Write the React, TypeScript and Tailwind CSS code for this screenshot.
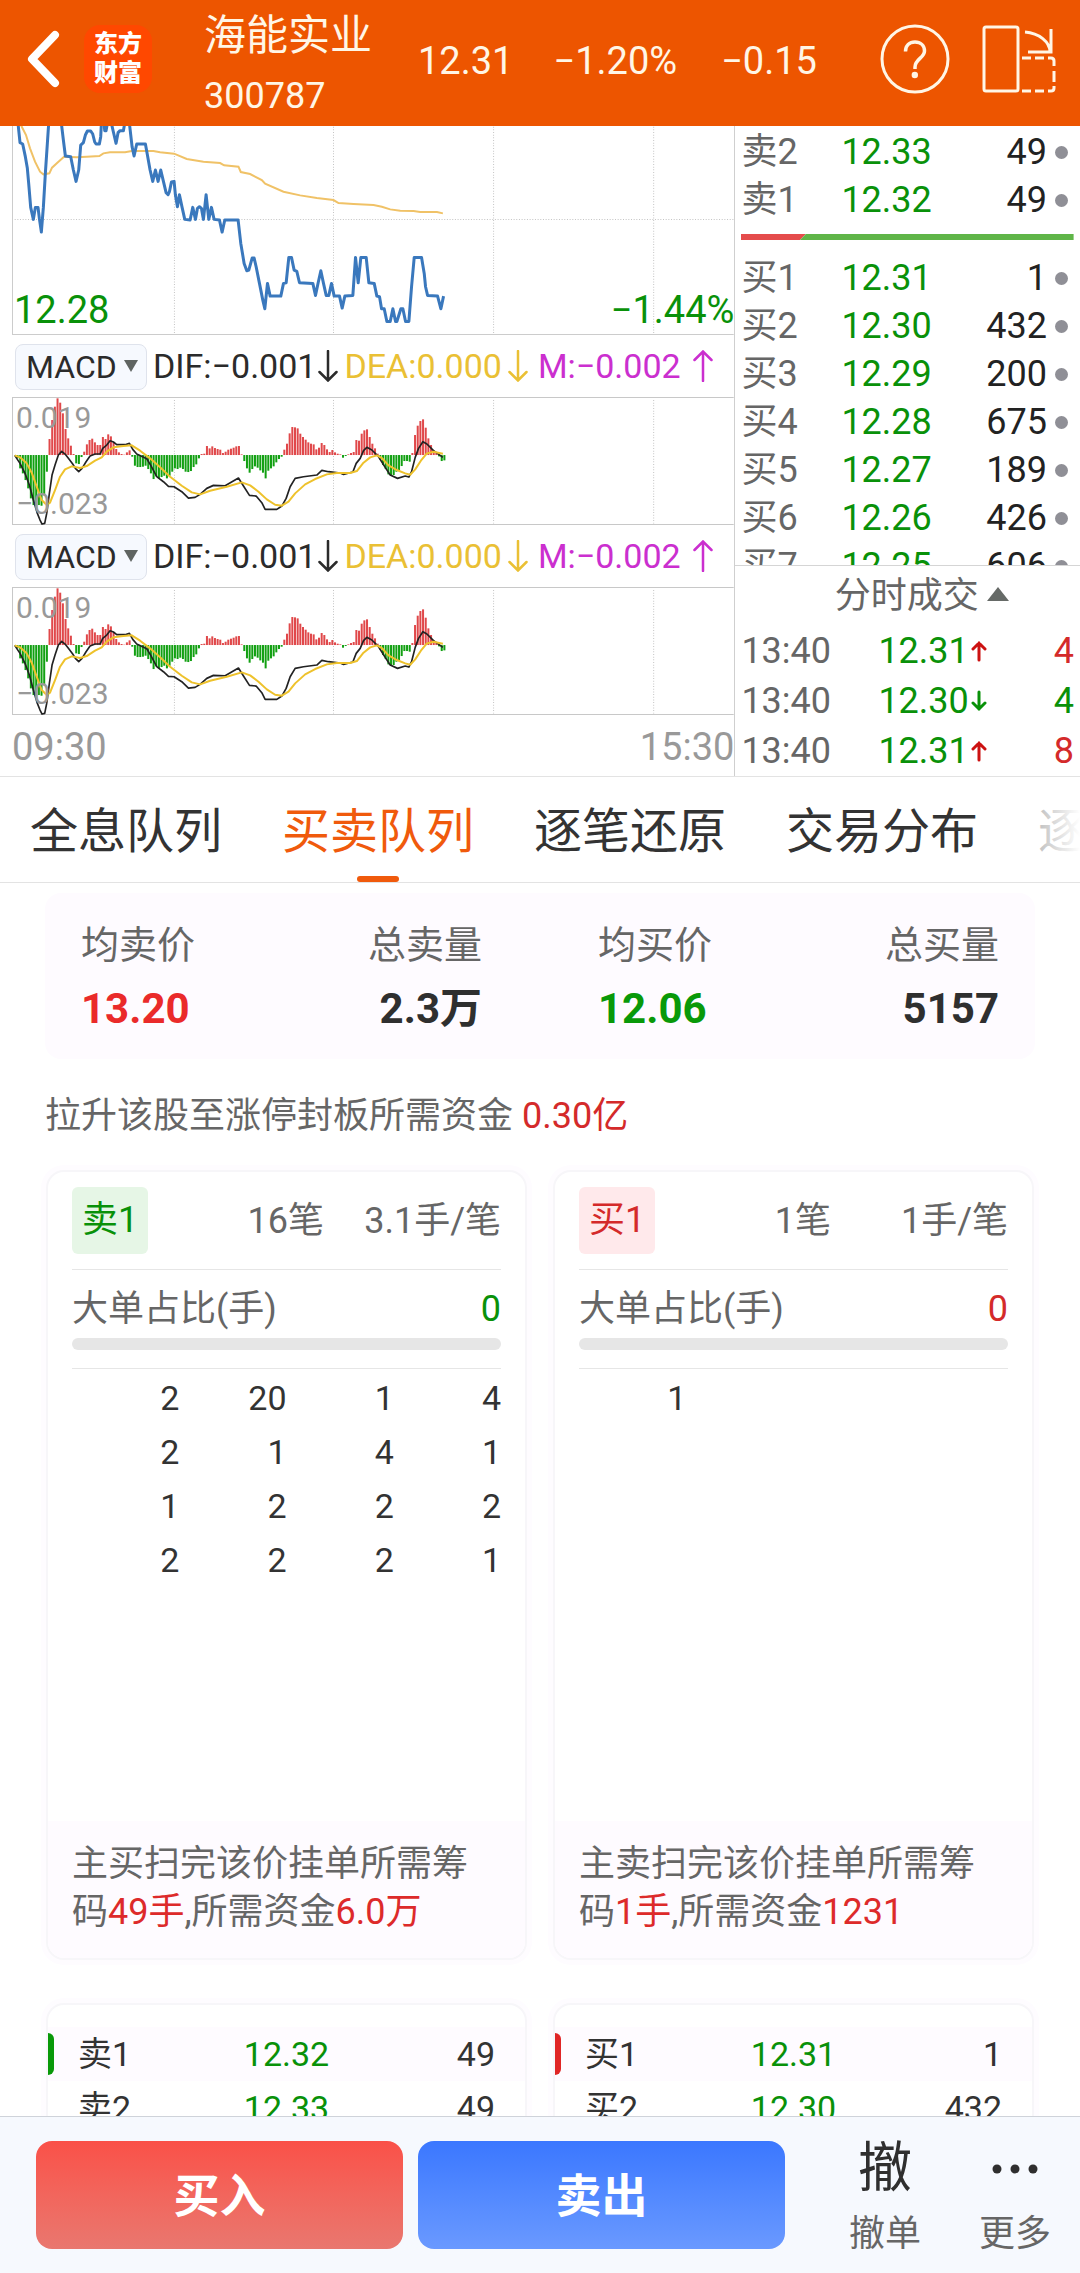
import clsx from "clsx";

type Quote = { label: string; price: string; volume: string };

const sells: Quote[] = [
  { label: "卖2", price: "12.33", volume: "49" },
  { label: "卖1", price: "12.32", volume: "49" },
];

const buys: Quote[] = [
  { label: "买1", price: "12.31", volume: "1" },
  { label: "买2", price: "12.30", volume: "432" },
  { label: "买3", price: "12.29", volume: "200" },
  { label: "买4", price: "12.28", volume: "675" },
  { label: "买5", price: "12.27", volume: "189" },
  { label: "买6", price: "12.26", volume: "426" },
  { label: "买7", price: "12.25", volume: "606" },
];

const trades = [
  { time: "13:40", price: "12.31", up: true, volume: "4" },
  { time: "13:40", price: "12.30", up: false, volume: "4" },
  { time: "13:40", price: "12.31", up: true, volume: "8" },
];

const tabs = ["全息队列", "买卖队列", "逐笔还原", "交易分布", "逐"];

const priceLines = [
  "54,10 60,68 68,72 76,110 82,145 86,190 92,262 100,298 106,262 114,262 118,295 124,336 130,262 136,160 142,70 146,10",
  "184,10 190,60 196,108 212,110 220,150 228,184 236,150 242,75 250,68 256,45 262,33 272,33 278,42 284,66 288,72 298,72 302,50 304,10",
  "312,10 314,32 318,32 322,10",
  "334,10 340,36 348,70 354,38 360,32 370,32 374,10",
  "388,10 396,80 402,108 410,72 436,72 442,105 450,150 458,184 466,150 474,184 482,150 490,184 498,218 504,224 508,215 514,186 522,184 526,225 532,260 538,224 546,262 554,298 570,300 578,262 586,298 592,265 598,260 604,265 610,298 618,224 626,298 634,262 642,298 658,300 666,336 674,300 714,300 722,370 732,430 740,452 746,450 756,414 762,414 768,440 778,490 788,540 794,566 802,490 810,528 842,528 850,490 858,488 866,412 874,412 882,450 890,454 898,488 938,490 946,526 954,488 962,452 970,490 978,526 986,526 994,490 1002,528 1018,528 1026,564 1034,528 1058,526 1066,412 1074,488 1082,412 1098,412 1106,488 1122,490 1130,528 1138,530 1144,566 1152,566 1160,604 1170,604 1178,566 1186,604 1190,604 1202,566 1208,566 1216,604 1226,604 1234,500 1242,412 1264,412 1272,460 1276,500 1282,526 1312,528 1322,566 1330,528",
];

const averageLine =
  "60,10 78,45 90,85 105,125 120,155 130,163 148,160 156,143 172,128 192,110 230,112 260,110 298,108 310,100 330,97 375,97 395,93 460,93 480,97 522,101 560,117 610,125 660,129 672,136 715,140 722,156 750,162 785,180 795,191 850,215 900,226 950,234 1000,240 1015,249 1060,252 1120,255 1145,260 1170,268 1200,272 1240,273 1260,276 1310,276 1328,280";

const macdBars = [
  -10, -40, -55, -75, -100, -130, -150, -158, -150, -152, -120, -50, 48, 105, 145, 170, 157, 125, 78, 50, 28, 3, -25,
  -27, -6, 10, 32, 45, 49, 38, 30, 30, 54, 48, 62, 56, 38, 18, 8, 3, 1, 8, 14, -5, -32, -36, -36, -35, -32, -42, -55,
  -72, -64, -70, -66, -62, -70, -62, -50, -40, -42, -38, -42, -50, -51, -48, -36, -28, -10, 3, 4, 27, 20, 26, 21, 18,
  16, 6, 10, 16, 19, 22, 26, 27, 2, -18, -40, -53, -42, -34, -38, -46, -53, -70, -47, -40, -34, -22, -12, -5, 16, 34,
  65, 84, 83, 80, 64, 54, 46, 38, 34, 32, 17, 22, 36, 30, 17, 9, 15, 8, 4, 2, -8, -3, 2, 6, 9, 45, 43, 64, 74, 77, 54,
  34, 20, 4, -14, -30, -42, -58, -62, -60, -50, -48, -33, -18, -18, -20, 6, 60, 88, 102, 107, 82, 50, 30, 14, 8, -4,
  -18, -16,
];

const difLine =
  "44,226 60,250 75,280 88,315 100,360 112,400 120,420 126,432 134,430 140,400 148,340 156,285 165,255 175,225 185,214 195,222 205,235 218,252 226,265 236,275 246,265 258,245 270,228 285,222 300,222 308,205 320,195 330,182 340,186 350,194 375,194 388,190 398,208 410,222 440,236 452,256 470,290 490,305 505,319 522,320 545,335 565,354 585,352 600,343 620,325 640,316 675,317 715,294 730,318 748,346 768,348 785,368 795,388 830,388 845,378 858,355 870,320 885,295 910,290 950,285 965,271 985,275 1020,279 1030,283 1058,276 1068,250 1080,235 1090,212 1100,202 1115,210 1135,230 1155,262 1170,285 1192,295 1215,288 1226,291 1234,275 1245,232 1255,205 1268,185 1280,192 1300,212 1328,232";

const deaLine =
  "44,226 60,232 80,250 95,278 110,320 125,360 140,375 150,368 165,330 180,290 195,268 215,259 240,264 260,258 285,242 305,232 320,215 340,202 370,198 395,196 420,212 450,235 480,262 510,290 545,317 575,337 600,343 630,332 680,320 725,307 750,316 775,335 800,358 825,374 845,377 865,365 885,340 915,313 945,297 980,283 1010,279 1050,279 1070,273 1090,248 1110,232 1130,226 1145,234 1165,256 1190,270 1215,280 1230,284 1245,268 1262,242 1280,220 1300,215 1328,221";

const gridX = [523, 1000, 1480, 1960];

const ThinArrow = ({ up = false }: { up?: boolean }) => (
  <svg
    className="h-8 w-5 shrink-0"
    viewBox="0 0 20 32"
    fill="none"
    stroke="currentColor"
    strokeWidth="2.500"
    strokeLinecap="round"
  >
    {up ? <path d="M10 31V2M1.5 10 10 1.5 18.500 10" /> : <path d="M10 1v29M1.500 22 10 30.500 18.500 22" />}
  </svg>
);

const Header = () => (
  <header className="flex h-[126px] shrink-0 items-center bg-[#ed5500] pb-2 pl-6 text-[#fff6e6]">
    <button aria-label="返回" className="text-white">
      <svg className="h-[62px] w-10" viewBox="0 0 40 62" fill="none" stroke="currentColor" strokeWidth="8" strokeLinecap="round" strokeLinejoin="round">
        <path d="M31 7 8 31 31 55" />
      </svg>
    </button>
    <div className="ml-5 grid size-[68px] shrink-0 place-content-center rounded-2xl bg-[#ff4800] text-center text-2xl font-black leading-[29px] text-white">
      <span>东方</span>
      <span>财富</span>
    </div>
    <div className="ml-[52px] whitespace-nowrap pt-3.5 leading-[60px]">
      <div className="text-[42px]">海能实业</div>
      <div className="text-4xl leading-[60px]">300787</div>
    </div>
    <span className="ml-[46px] pt-1 text-[38px]">12.31</span>
    <span className="ml-10 pt-1 text-[38px]">−1.20%</span>
    <span className="ml-11 pt-1 text-[38px]">−0.15</span>
    <div className="ml-auto flex shrink-0 items-center gap-8 pr-6">
      <button aria-label="帮助">
        <svg className="size-[70px]" viewBox="0 0 70 70" fill="none" stroke="currentColor" strokeWidth="3">
          <circle cx="35" cy="35" r="33" />
          <path d="M25.500 27.500c0-6 4-9.500 9.500-9.500s9.500 3.500 9.500 9c0 7-9.500 8-9.500 16v2" strokeWidth="3.500" />
          <circle cx="34.800" cy="51" r="3.200" fill="currentColor" stroke="none" />
        </svg>
      </button>
      <button aria-label="横屏">
        <svg className="h-[68px] w-[74px]" viewBox="0 0 74 68" fill="none" stroke="currentColor" strokeWidth="3">
          <rect x="2" y="2" width="34" height="64" rx="2" />
          <path d="M43 7c14 1 25 10 25 20M69 4v23H46" />
          <path d="M40 33h9M53 33h9M66 33h3q3 0 3 3v5M72 46v11M72 61v2q0 3-3 3h-3M62 66h-9M49 66h-9" />
        </svg>
      </button>
    </div>
  </header>
);

const PriceChart = () => (
  <div className="relative">
    <svg className="block w-full" viewBox="36 18 2166 627" fill="none">
      <g stroke="#c4c4c4" strokeWidth="3" strokeDasharray="3 5">
        {gridX.map((x) => (
          <path key={x} d={`M${x} 20V642`} />
        ))}
        <path d="M44 298H2200" />
      </g>
      <path d="M37.500 18V643.500H2200" stroke="#cccccc" strokeWidth="3" />
      <polyline points={averageLine} stroke="#f0c267" strokeWidth="6" />
      {priceLines.map((points) => (
        <polyline key={points} points={points} stroke="#3a78bd" strokeWidth="9" strokeLinejoin="round" />
      ))}
    </svg>
    <div className="absolute inset-x-0 bottom-0 flex justify-between pl-0.5 text-[38px] leading-[50px] text-[#099109]">
      <span>12.28</span>
      <span>−1.44%</span>
    </div>
  </div>
);

const MacdPanel = ({ id }: { id: string }) => (
  <section>
    <div className="flex h-[62px] items-center gap-1.5 whitespace-nowrap pl-[3px] text-[34px] text-[#2b2b2b]">
      <div className="relative shrink-0">
        <select
          id={id}
          aria-label="指标"
          className="h-[46px] w-[132px] appearance-none rounded-lg border border-[#dfe3ec] bg-[#f6f9fe] pl-2.5 text-[32px] leading-[44px]"
        >
          <option>MACD</option>
        </select>
        <svg className="pointer-events-none absolute right-2 top-[18px] h-3.5 w-4" viewBox="0 0 16 14">
          <path d="M1 1h14L8 13z" fill="#5f6461" />
        </svg>
      </div>
      <span className="flex items-center gap-0.5">
        DIF:−0.001
        <ThinArrow />
      </span>
      <span className="flex items-center gap-1.5 text-[#eac034]">
        DEA:0.000
        <ThinArrow />
      </span>
      <span className="flex items-center gap-3 pl-1 text-[#cb2fcf]">
        M:−0.002
        <ThinArrow up />
      </span>
    </div>
    <div className="relative">
      <svg className="block w-full" viewBox="36 51 2166 384" fill="none">
        <g stroke="#c4c4c4" strokeWidth="3" strokeDasharray="3 5">
          {gridX.map((x) => (
            <path key={x} d={`M${x} 60V430`} />
          ))}
        </g>
        <path d="M2200 52.500H37.500V433.500H2200" stroke="#c8c8c8" strokeWidth="3" />
        {macdBars.map((v, i) => (
          <rect
            key={i}
            x={49.5 + i * 8}
            y={v > 0 ? 225 - v : 225}
            width="6"
            height={Math.abs(v)}
            fill={v > 0 ? "#e0484a" : "#12a012"}
          />
        ))}
        <polyline points={difLine} stroke="#222222" strokeWidth="5" strokeLinejoin="round" />
        <polyline points={deaLine} stroke="#eec22c" strokeWidth="6" strokeLinejoin="round" />
      </svg>
      <div className="absolute inset-y-0 left-1 flex flex-col justify-between py-1 text-3xl leading-[34px] text-[#999999]">
        <span>0.019</span>
        <span>−0.023</span>
      </div>
    </div>
  </section>
);

const BookRows = ({ rows }: { rows: Quote[] }) => (
  <table className="w-full table-fixed text-4xl leading-[48px]">
    <tbody>
      {rows.map((row) => (
        <tr key={row.label} className="leading-[48px]">
          <th scope="row" className="w-[100px] p-0 text-left font-normal text-[#666666]">
            {row.label}
          </th>
          <td className="p-0 text-[#099109]">{row.price}</td>
          <td className="w-[120px] p-0 text-[#222222]">
            <div className="flex items-center justify-end gap-2">
              {row.volume}
              <i className="size-[13px] rounded-full bg-[#8f8f96]" />
            </div>
          </td>
        </tr>
      ))}
    </tbody>
  </table>
);

const OrderBook = () => (
  <aside className="flex min-w-0 flex-1 flex-col border-l border-[#cfcfcf]">
    <div className="h-[440px] overflow-hidden border-b border-[#d5d5d5] pt-0.5">
      <div className="pl-1.5 pr-3">
        <BookRows rows={sells} />
      </div>
      <svg className="mx-1.5 my-2.5 block h-1.5 w-[calc(100%-12px)]" viewBox="0 0 333 6" preserveAspectRatio="none">
        <path d="M0 0H65L59 6H0z" fill="#e54c4c" />
        <path d="M65 0H333V6H59z" fill="#5fb548" />
      </svg>
      <div className="pl-1.5 pr-3 pt-1">
        <BookRows rows={buys} />
      </div>
    </div>
    <button className="flex h-[60px] items-center justify-center gap-2 pl-7 text-4xl text-[#666666]">
      分时成交
      <svg className="mb-1 h-3.5 w-[22px]" viewBox="0 0 22 14">
        <path d="M11 0 22 14H0z" fill="#666a67" />
      </svg>
    </button>
    <table className="w-full table-fixed text-4xl leading-[50px]">
      <tbody>
        {trades.map((t, i) => (
          <tr key={i} className="leading-[50px]">
            <td className="w-[143px] p-0 pl-1.5 text-[#666666]">{t.time}</td>
            <td className="p-0 text-[#099109]">
              <span className="flex items-center gap-0.5">
                {t.price}
                <svg
                  className={clsx("h-6 w-4", t.up ? "text-[#cc1111]" : "rotate-180 text-[#099109]")}
                  viewBox="0 0 16 24"
                  fill="none"
                  stroke="currentColor"
                  strokeWidth="3"
                  strokeLinecap="round"
                >
                  <path d="M8 21V4M2 10 8 4l6 6" />
                </svg>
              </span>
            </td>
            <td className={clsx("w-16 p-0 pr-1.5 text-right", t.up ? "text-[#d42a2a]" : "text-[#099109]")}>
              {t.volume}
            </td>
          </tr>
        ))}
      </tbody>
    </table>
  </aside>
);

const QueueCard = ({
  side,
  count,
  average,
  cells,
  action,
  lots,
  money,
}: {
  side: "sell" | "buy";
  count: string;
  average: string;
  cells: number[][];
  action: string;
  lots: string;
  money: string;
}) => {
  const sell = side === "sell";
  return (
    <article className="flex min-h-[786px] flex-col overflow-hidden rounded-2xl bg-white text-4xl text-[#666666] shadow-[0_0_0_2px_#f7f6f9,0_0_0_7px_#fefcff]">
      <div className="mx-6 flex items-center border-b border-[#e6e6e6] py-[15px]">
        <span
          className={clsx(
            "rounded-md px-2.5 leading-[67px]",
            sell ? "bg-[#e6f6e6] text-[#099109]" : "bg-[#ffe9eb] text-[#d42a2a]"
          )}
        >
          {sell ? "卖1" : "买1"}
        </span>
        <span className="flex-1 text-right">{count}</span>
        <span className="w-[177px] text-right">{average}</span>
      </div>
      <div className="mx-6 border-b border-[#e6e6e6] pb-[18px] pt-3">
        <div className="flex justify-between leading-[54px]">
          <span>大单占比(手)</span>
          <span className={sell ? "text-[#099109]" : "text-[#d42a2a]"}>0</span>
        </div>
        <div className="mt-0.5 h-3 rounded-full bg-[#e6e6e6]" />
      </div>
      <div className="px-6 pt-0.5">
        <table className="w-full table-fixed text-right text-[34px] leading-[54px] text-[#333333]">
          <tbody>
            {cells.map((row, i) => (
              <tr key={i}>
                {[0, 1, 2, 3].map((c) => (
                  <td key={c} className="p-0">
                    {row[c]}
                  </td>
                ))}
              </tr>
            ))}
          </tbody>
        </table>
      </div>
      <p className="mt-auto bg-[#fefbff] px-6 pb-[22px] pt-[19px] leading-[48px]">
        {action}扫完该价挂单所需筹码<span className="text-[#dd2a2a]">{lots}</span>,所需资金
        <span className="text-[#dd2a2a]">{money}</span>
      </p>
    </article>
  );
};

const LevelCard = ({ side, rows }: { side: "sell" | "buy"; rows: Quote[] }) => (
  <article className="relative rounded-2xl bg-white pt-[22px] pb-6 text-[34px] leading-[54px] text-[#333333] shadow-[0_0_0_2px_#f7f6f9,0_0_0_7px_#fefcff]">
    <table className="w-full table-fixed">
      <tbody>
        {rows.map((row, i) => (
          <tr key={row.label} className={i === 0 ? "bg-[#fefbff]" : ""}>
            <th scope="row" className="p-0 pl-[30px] text-left font-normal">
              {row.label}
            </th>
            <td className="p-0 text-center text-[#099109]">{row.price}</td>
            <td className="p-0 pr-[30px] text-right">{row.volume}</td>
          </tr>
        ))}
      </tbody>
    </table>
    <i
      className={clsx(
        "absolute left-0 top-7 h-[42px] w-1.5 rounded-r-md",
        side === "sell" ? "bg-[#099909]" : "bg-[#e02626]"
      )}
    />
  </article>
);

const App = () => {
  return (
    <div className="flex h-screen flex-col overflow-hidden bg-white font-['Roboto','Noto_Sans_CJK_SC',sans-serif] text-[#333333]">
      <Header />

      {/* Intraday charts and order book */}
      <div className="flex shrink-0 border-b border-[#e3e3e3]">
        <div className="w-[68%] shrink-0 pl-3">
          <PriceChart />
          <MacdPanel id="indicator-1" />
          <MacdPanel id="indicator-2" />
          <div className="flex justify-between pt-1 text-[38px] leading-[56px] text-[#999999]">
            <span>09:30</span>
            <span>15:30</span>
          </div>
        </div>
        <OrderBook />
      </div>

      {/* Tabs */}
      <nav className="relative flex h-[106px] shrink-0 gap-[60px] overflow-hidden border-b border-[#e3e3e3] pl-[30px]">
        {tabs.map((tab) => (
          <button
            key={tab}
            className={clsx(
              "relative shrink-0 whitespace-nowrap pt-1 text-5xl",
              tab === "买卖队列" ? "text-[#f05a0c]" : "text-[#333333]"
            )}
          >
            {tab}
            {tab === "买卖队列" && (
              <i className="absolute bottom-0 left-1/2 h-1.5 w-[42px] -translate-x-1/2 rounded-full bg-[#f05a0c]" />
            )}
          </button>
        ))}
        <div className="pointer-events-none absolute inset-y-0 right-0 w-14 bg-gradient-to-r from-white/60 to-white" />
      </nav>

      {/* Queue detail */}
      <main className="min-h-0 flex-1 overflow-hidden pt-2.5">
        <dl className="mx-[45px] grid grid-cols-2 gap-x-[116px] rounded-2xl bg-[#fefbff] px-9 pb-[18px] pt-5 text-[38px] leading-[64px] text-[#666666]">
          <div className="flex justify-between">
            <div>
              <dt>均卖价</dt>
              <dd className="text-[42px] font-bold leading-[64px] text-[#ea2a2a]">13.20</dd>
            </div>
            <div className="text-right">
              <dt>总卖量</dt>
              <dd className="text-[42px] font-bold leading-[64px] text-[#2f2f2f]">2.3万</dd>
            </div>
          </div>
          <div className="flex justify-between">
            <div>
              <dt>均买价</dt>
              <dd className="text-[42px] font-bold leading-[64px] text-[#099909]">12.06</dd>
            </div>
            <div className="text-right">
              <dt>总买量</dt>
              <dd className="text-[42px] font-bold leading-[64px] text-[#2f2f2f]">5157</dd>
            </div>
          </div>
        </dl>

        <p className="mx-[45px] mt-8 text-4xl leading-[50px] text-[#666666]">
          拉升该股至涨停封板所需资金 <span className="text-[#d42a2a]">0.30亿</span>
        </p>

        <div className="mx-12 mt-[31px] grid grid-cols-2 gap-x-[30px] gap-y-[47px]">
          <QueueCard
            side="sell"
            count="16笔"
            average="3.1手/笔"
            cells={[
              [2, 20, 1, 4],
              [2, 1, 4, 1],
              [1, 2, 2, 2],
              [2, 2, 2, 1],
            ]}
            action="主买"
            lots="49手"
            money="6.0万"
          />
          <QueueCard side="buy" count="1笔" average="1手/笔" cells={[[1]]} action="主卖" lots="1手" money="1231" />
          <LevelCard side="sell" rows={[sells[1], sells[0]]} />
          <LevelCard side="buy" rows={buys.slice(0, 2)} />
        </div>
      </main>

      {/* Trade actions */}
      <footer className="flex shrink-0 items-start border-t border-[#cfd3da] bg-[#f6f9fe] pb-6 pl-9 pt-6">
        <div className="flex flex-1 gap-[15px] text-[46px] font-bold text-white">
          <button className="h-[108px] flex-1 rounded-2xl bg-gradient-to-b from-[#fa5048] to-[#e9776f] pt-0.5">买入</button>
          <button className="h-[108px] flex-1 rounded-2xl bg-gradient-to-b from-[#3a77ff] to-[#6a99ff] pt-0.5">卖出</button>
        </div>
        <div className="ml-[35px] grid w-[260px] grid-cols-2 text-4xl text-[#666666]">
          <button className="flex h-[108px] flex-col items-center">
            <span className="text-[54px] leading-[56px] text-[#2f2f2f]">撤</span>
            <span className="pt-3 leading-[50px]">撤单</span>
          </button>
          <button className="flex h-[108px] flex-col items-center">
            <svg className="h-14 w-12 shrink-0 text-[#2f2f2f]" viewBox="0 0 48 56" fill="currentColor">
              <circle cx="6" cy="28" r="4.500" />
              <circle cx="24" cy="28" r="4.500" />
              <circle cx="42" cy="28" r="4.500" />
            </svg>
            <span className="pt-3 leading-[50px]">更多</span>
          </button>
        </div>
      </footer>
    </div>
  );
};

export default App;
